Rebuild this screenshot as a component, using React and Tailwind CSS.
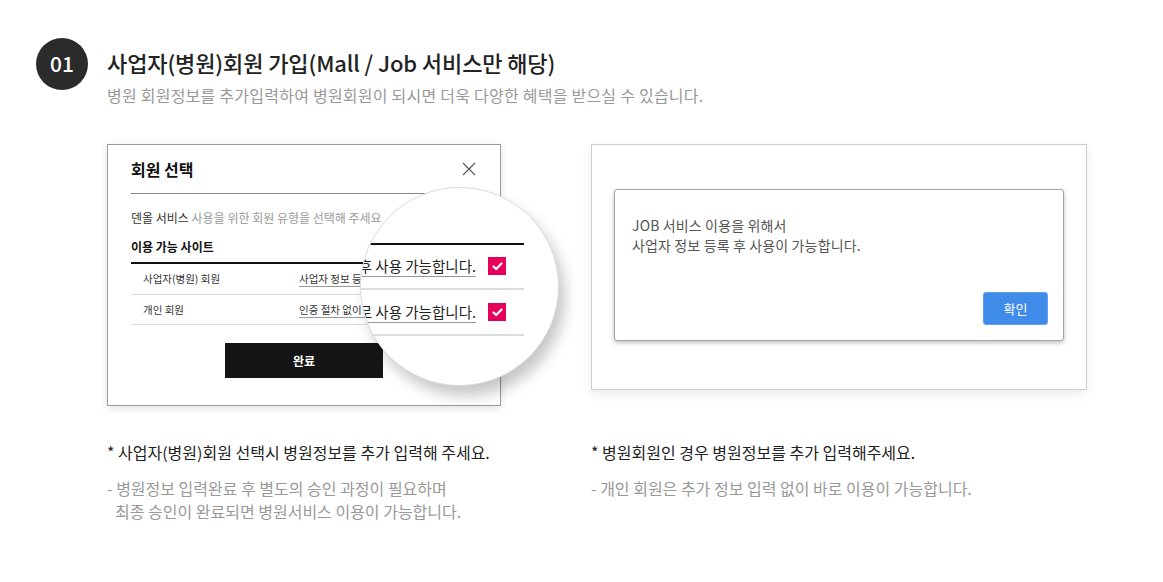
import React from "react";

const font = { fontFamily: '"Noto Sans CJK KR", "Noto Sans", sans-serif' };

function CheckBox() {
  return (
    <span className="flex h-[18px] w-[18px] shrink-0 items-center justify-center bg-[#e6005c]">
      <svg width="11" height="9" viewBox="0 0 11 9" fill="none">
        <path d="M1.5 4.5 L4.2 7 L9.5 1.5" stroke="white" strokeWidth="2.2" strokeLinecap="round" strokeLinejoin="round" />
      </svg>
    </span>
  );
}

function Magnifier() {
  return (
    <div className="absolute left-[252px] top-[42px] h-[199px] w-[199px] overflow-hidden rounded-full border border-[#dcdcdc] bg-white shadow-[6px_10px_14px_rgba(0,0,0,0.22)]">
      <div className="absolute left-0 top-[55px] h-[2px] w-[163px] bg-[#111]" />
      <div className="absolute right-[82px] top-[66px] flex h-[24px] items-center whitespace-nowrap">
        <span className="text-[14.5px] text-[#222] underline decoration-[#999] underline-offset-[4px]">후 사용 가능합니다.</span>
      </div>
      <div className="absolute left-[127px] top-[69px]"><CheckBox /></div>
      <div className="absolute left-0 top-[100px] h-[2px] w-[163px] bg-[#ddd]" />
      <div className="absolute right-[82px] top-[112px] flex h-[24px] items-center whitespace-nowrap">
        <span className="text-[14.5px] text-[#222] underline decoration-[#999] underline-offset-[4px]">로 사용 가능합니다.</span>
      </div>
      <div className="absolute left-[127px] top-[115px]"><CheckBox /></div>
      <div className="absolute left-0 top-[146px] h-[2px] w-[163px] bg-[#ddd]" />
    </div>
  );
}

function MemberModal() {
  return (
    <div className="relative h-[262px] w-[394px] border border-[#9a9a9a] bg-white shadow-[0_2px_8px_rgba(0,0,0,0.12)]">
      <div className="px-[23px]">
        <div className="flex h-[49px] items-center justify-between border-b border-[#888]">
          <span className="text-[16px] font-bold text-[#111]">회원 선택</span>
          <svg width="14" height="14" viewBox="0 0 14 14" className="mr-[1px]">
            <path d="M1 1 L13 13 M13 1 L1 13" stroke="#555" strokeWidth="1.1" />
          </svg>
        </div>
        <p className="mt-[14px] text-[12px] leading-[20px] text-[#999]">
          <span className="text-[#333]">덴올 서비스</span> 사용을 위한 회원 유형을 선택해 주세요
        </p>
        <p className="mt-[9px] text-[12px] font-bold leading-[20px] text-[#111]">이용 가능 사이트</p>
        <div className="mt-[5px] border-t-[2px] border-[#111]">
          <div className="flex h-[31px] items-center border-b border-[#ddd] pl-[12px] text-[10.5px] text-[#333]">
            <span className="w-[156px]">사업자(병원) 회원</span>
            <span className="underline decoration-[#999] underline-offset-[3px]">사업자 정보 등록 후 사용 가능합니다.</span>
          </div>
          <div className="flex h-[30px] items-center border-b border-[#ddd] pl-[12px] text-[10.5px] text-[#333]">
            <span className="w-[156px]">개인 회원</span>
            <span className="underline decoration-[#999] underline-offset-[3px]">인증 절차 없이 바로 사용 가능합니다.</span>
          </div>
        </div>
        <div className="mt-[18px] flex justify-center">
          <button className="h-[35px] w-[158px] bg-[#151515] text-[12px] font-bold text-white">완료</button>
        </div>
      </div>
      <Magnifier />
    </div>
  );
}

function JobAlert() {
  return (
    <div className="h-[246px] w-[496px] border border-[#cfcfcf] bg-white pl-[22px] pt-[44px] shadow-[0_4px_10px_rgba(0,0,0,0.08)]">
      <div className="relative h-[152px] w-[450px] rounded-[3px] border border-[#a5a5a5] bg-white shadow-[0_2px_4px_rgba(0,0,0,0.25)]">
        <p className="pl-[17px] pt-[25px] text-[14px] leading-[20px] tracking-[0.01em] text-[#555]">
          JOB 서비스 이용을 위해서
          <br />
          사업자 정보 등록 후 사용이 가능합니다.
        </p>
        <button className="absolute bottom-[15px] right-[15px] h-[33px] w-[65px] rounded-[3px] border border-[#5fa0ee] bg-[#3e8be9] text-[13px] text-white">
          확인
        </button>
      </div>
    </div>
  );
}

export default function App() {
  return (
    <div className="h-[582px] w-[1163px] bg-white pl-[36px] pt-[38px]" style={font}>
      <div className="flex">
        <div className="flex h-[52px] w-[52px] items-center justify-center rounded-full bg-[#2b2b2b] text-[21px] font-medium text-white">
          01
        </div>
        <div className="ml-[19px]">
          <h1 className="mt-[9px] text-[22px] font-medium leading-[30px] tracking-[-0.005em] text-[#222]">
            사업자(병원)회원 가입(Mall / Job 서비스만 해당)
          </h1>
          <p className="mt-[7px] text-[16px] leading-[22px] tracking-[0.015em] text-[#999]">
            병원 회원정보를 추가입력하여 병원회원이 되시면 더욱 다양한 혜택을 받으실 수 있습니다.
          </p>
        </div>
      </div>

      <div className="ml-[71px] mt-[38px] grid grid-cols-[394px_496px] gap-x-[90px]">
        <MemberModal />
        <JobAlert />

        <div className="mt-[35px]">
          <p className="text-[16px] leading-[22px] text-[#222]">* 사업자(병원)회원 선택시 병원정보를 추가 입력해 주세요.</p>
          <p className="mt-[14px] text-[16px] leading-[23px] text-[#999]">
            - 병원정보 입력완료 후 별도의 승인 과정이 필요하며
            <br />
            <span className="pl-[8px]">최종 승인이 완료되면 병원서비스 이용이 가능합니다.</span>
          </p>
        </div>
        <div className="mt-[35px]">
          <p className="text-[16px] leading-[22px] text-[#222]">* 병원회원인 경우 병원정보를 추가 입력해주세요.</p>
          <p className="mt-[14px] text-[16px] leading-[23px] text-[#999]">- 개인 회원은 추가 정보 입력 없이 바로 이용이 가능합니다.</p>
        </div>
      </div>
    </div>
  );
}
